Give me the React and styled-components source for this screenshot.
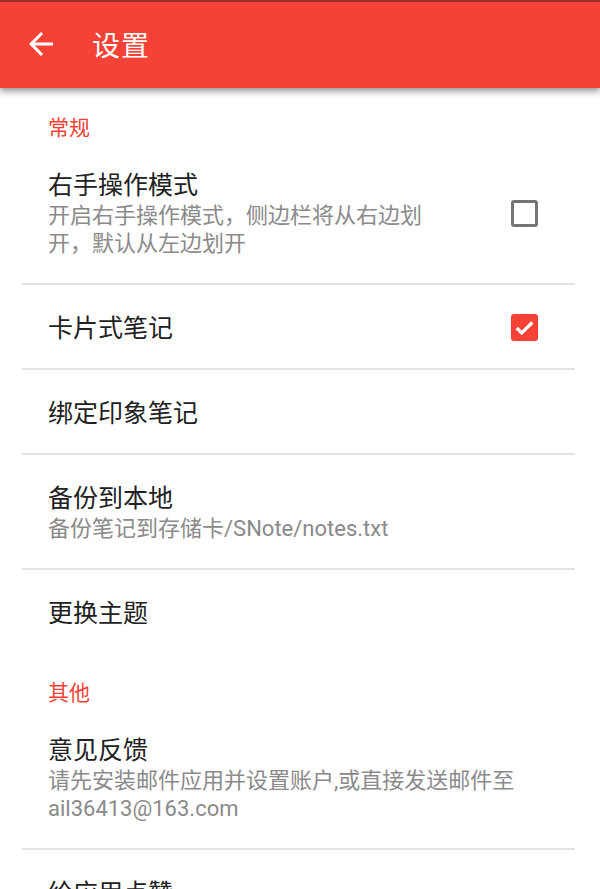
import React from "react";
import styled, { createGlobalStyle } from "styled-components";

const GlobalStyle = createGlobalStyle`
  html, body {
    margin: 0;
    padding: 0;
    background: #ffffff;
    overflow: hidden;
  }
  body {
    font-family: Roboto, "Noto Sans CJK SC", sans-serif;
  }
`;

const sections = [
  {
    name: "常规",
    items: [
      {
        title: "右手操作模式",
        summary: "开启右手操作模式，侧边栏将从右边划开，默认从左边划开",
        checkbox: false,
      },
      { title: "卡片式笔记", checkbox: true },
      { title: "绑定印象笔记" },
      { title: "备份到本地", summary: "备份笔记到存储卡/SNote/notes.txt" },
      { title: "更换主题", last: true },
    ],
  },
  {
    name: "其他",
    items: [
      {
        title: "意见反馈",
        summary: "请先安装邮件应用并设置账户,或直接发送邮件至ail36413@163.com",
      },
      { title: "给应用点赞" },
    ],
  },
];

export default function App() {
  return (
    <>
      <GlobalStyle />
      <Page>
        <Toolbar>
          <BackButton>
            <svg width="36" height="36" viewBox="0 0 24 24" fill="#ffffff">
              <path d="M20 11H7.83l5.59-5.59L12 4l-8 8 8 8 1.41-1.41L7.83 13H20v-2z" />
            </svg>
          </BackButton>
          <Title>设置</Title>
        </Toolbar>
        <List>
          {sections.map((section) => (
            <div key={section.name}>
              <SectionHeader>{section.name}</SectionHeader>
              {section.items.map((item) => (
                <Row key={item.title} $last={item.last}>
                  <TextBlock $narrow={item.checkbox !== undefined}>
                    <ItemTitle>{item.title}</ItemTitle>
                    {item.summary && <Summary>{item.summary}</Summary>}
                  </TextBlock>
                  {item.checkbox !== undefined && (
                    <CheckBox $checked={item.checkbox}>
                      {item.checkbox && (
                        <svg width="25" height="25" viewBox="0 0 24 24">
                          <path
                            d="M4.5 12.5l4.8 4.8L19.5 7.2"
                            fill="none"
                            stroke="#ffffff"
                            strokeWidth="3.2"
                          />
                        </svg>
                      )}
                    </CheckBox>
                  )}
                </Row>
              ))}
            </div>
          ))}
        </List>
      </Page>
    </>
  );
}

const Page = styled.div`
  width: 600px;
  height: 889px;
  overflow: hidden;
  background: #ffffff;
`;

const Toolbar = styled.header`
  height: 86px;
  background: #f44336;
  border-top: 2px solid #9c2e27;
  display: flex;
  align-items: center;
  box-shadow: 0 3px 7px rgba(0, 0, 0, 0.45);
  position: relative;
  z-index: 1;
`;

const BackButton = styled.div`
  width: 36px;
  height: 36px;
  margin-left: 23px;
  margin-right: 33px;
  display: flex;
  margin-top: -2px;
`;

const Title = styled.h1`
  margin: 0;
  color: #ffffff;
  font-size: 28px;
  font-weight: 400;
  letter-spacing: 1px;
  margin-top: -3px;
`;

const List = styled.div`
  margin: 0 25px 0 22px;
`;

const SectionHeader = styled.div`
  padding: 26px 26px 0;
  line-height: 28px;
  font-size: 21px;
  color: #f44336;
`;

const Row = styled.div`
  display: flex;
  align-items: center;
  justify-content: space-between;
  padding: 26px 37px 25px 26px;
  border-bottom: ${(p) => (p.$last ? "none" : "2px solid #e3e3e3")};
`;

const TextBlock = styled.div`
  max-width: ${(p) => (p.$narrow ? "390px" : "none")};
  display: flex;
  flex-direction: column;
  gap: 2px;
`;

const ItemTitle = styled.div`
  font-size: 25px;
  line-height: 32px;
  color: #212121;
  margin-top: 2px;
  margin-bottom: -2px;
`;

const Summary = styled.div`
  font-size: 22px;
  line-height: 28px;
  color: #8a8a8a;
`;

const CheckBox = styled.div`
  width: 27px;
  height: 27px;
  box-sizing: border-box;
  border-radius: 3px;
  border: ${(p) => (p.$checked ? "none" : "3px solid #757575")};
  background: ${(p) => (p.$checked ? "#f44336" : "transparent")};
  display: flex;
  align-items: center;
  justify-content: center;
  flex-shrink: 0;
`;
